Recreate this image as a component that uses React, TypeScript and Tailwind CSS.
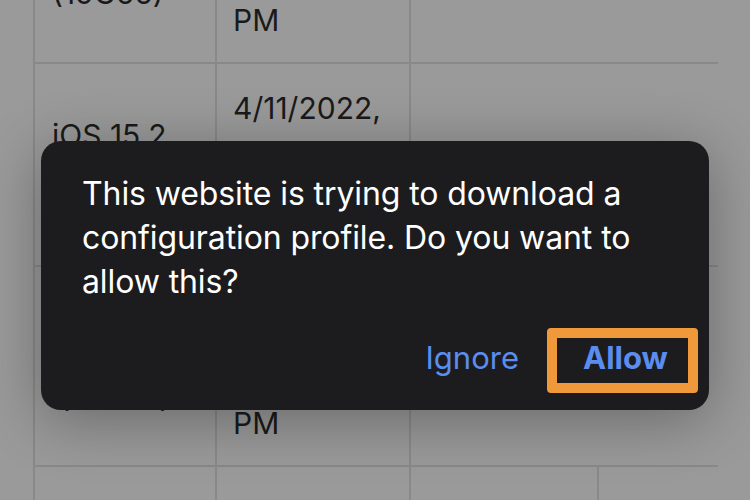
import React from 'react';

const cellText = 'text-[30px] leading-[45px] text-[#1a1a1a]';

function Cell({ w, children, className = '' }: { w: string; children?: React.ReactNode; className?: string }) {
  return (
    <div className={`${w} shrink-0 border-l-2 border-[#898989] flex flex-col ${className}`}>
      {children}
    </div>
  );
}

export default function App() {
  return (
    <div
      className="relative w-[750px] h-[500px] overflow-hidden bg-[#9a9a9a]"
      style={{ fontFamily: 'Inter, "Noto Sans", sans-serif' }}
    >
      {/* Table behind the dimmed sheet */}
      <div className="pl-[33px] -mt-[138px] w-[718px]">
        {/* row 1 */}
        <div className="flex h-[200px]">
          <Cell w="w-[182px]" className="justify-end pl-[17px] pb-[46px]">
            <p className={cellText}>iOS 15.1</p>
            <p className={cellText}>(19C66)</p>
          </Cell>
          <Cell w="w-[194px]" className="justify-end pl-[16px] pb-[19px]">
            <p className={cellText}>4/10/2022,</p>
            <p className={cellText}>9:14:02</p>
            <p className={cellText}>PM</p>
          </Cell>
          <Cell w="flex-1" />
        </div>
        {/* row 2 */}
        <div className="flex h-[203px] border-t-2 border-[#898989]">
          <Cell w="w-[182px]" className="pl-[17px] pt-[49px]">
            <p className={cellText}>iOS 15.2</p>
            <p className={cellText}>(19C56)</p>
          </Cell>
          <Cell w="w-[194px]" className="pl-[16px] pt-[22px]">
            <p className={cellText}>4/11/2022,</p>
            <p className={cellText}>10:02:51</p>
            <p className={cellText}>PM</p>
          </Cell>
          <Cell w="flex-1" />
        </div>
        {/* row 3 */}
        <div className="flex h-[200px] border-t-2 border-[#898989]">
          <Cell w="w-[182px]" className="justify-end pl-[24px] pb-[45px]">
            <p className={cellText}>iOS 15.3</p>
            <p className={cellText}>(19D50)</p>
          </Cell>
          <Cell w="w-[194px]" className="justify-end pl-[16px] pb-[19px]">
            <p className={cellText}>4/12/2022,</p>
            <p className={cellText}>8:37:20</p>
            <p className={cellText}>PM</p>
          </Cell>
          <Cell w="flex-1" />
        </div>
        {/* row 4 */}
        <div className="flex h-[60px] border-t-2 border-[#898989]">
          <Cell w="w-[182px]" />
          <Cell w="w-[194px]" />
          <Cell w="w-[188px]" />
          <Cell w="w-[121px]" />
        </div>
      </div>

      {/* Alert */}
      <div className="absolute left-[41px] top-[141px] w-[668px] h-[269px] rounded-[20px] bg-[#1c1c1e] shadow-[0_10px_60px_rgba(0,0,0,0.32)] flex flex-col">
        <p className="px-[41px] pt-[31px] text-[32px] leading-[44px] text-white tracking-[-0.1px]">
          This website is trying to download a configuration profile. Do you want to allow this?
        </p>
        <div className="mt-auto mb-[17px] mr-[11px] flex items-center justify-end">
          <span className="mr-[28px] text-[31px] leading-[40px] text-[#5b8def] pb-[6px]">Ignore</span>
          <div className="w-[151px] h-[65px] border-[10px] border-[#f0993b] rounded-[4px] flex items-center justify-center pl-[6px] pb-[6px]">
            <span className="text-[31px] leading-[40px] font-bold text-[#5b8def]">Allow</span>
          </div>
        </div>
      </div>
    </div>
  );
}
